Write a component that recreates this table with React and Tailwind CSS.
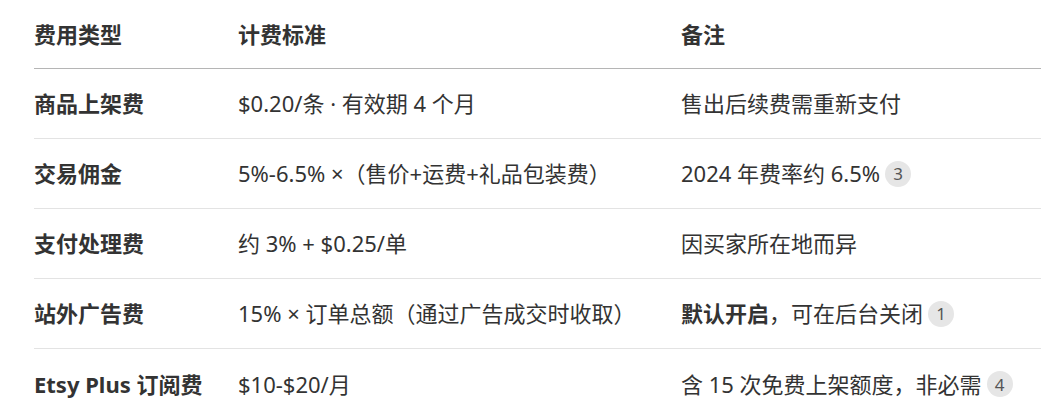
const rows = [
  {
    type: '商品上架费',
    rule: '$0.20/条 · 有效期 4 个月',
    note: <>售出后续费需重新支付</>,
  },
  {
    type: '交易佣金',
    rule: '5%-6.5% ×（售价+运费+礼品包装费）',
    note: <>2024 年费率约 6.5%</>,
    cite: '3',
  },
  {
    type: '支付处理费',
    rule: '约 3% + $0.25/单',
    note: <>因买家所在地而异</>,
  },
  {
    type: '站外广告费',
    rule: '15% × 订单总额（通过广告成交时收取）',
    note: <><strong className="font-bold">默认开启</strong>，可在后台关闭</>,
    cite: '1',
  },
  {
    type: 'Etsy Plus 订阅费',
    rule: '$10-$20/月',
    note: <>含 15 次免费上架额度，非必需</>,
    cite: '4',
  },
]

function Cite({ n }) {
  return (
    <span className="ml-[5px] inline-flex h-[26px] w-[26px] shrink-0 items-center justify-center rounded-full bg-[#e6e6e6] text-[17px] leading-none text-[#555]">
      {n}
    </span>
  )
}

export default function App() {
  return (
    <div
      className="bg-white pl-[34px] pr-[7px] text-[22px] text-[#333]"
      style={{ fontFamily: '"Noto Sans", "Noto Sans CJK SC", sans-serif' }}
    >
      <div className="grid h-[69px] grid-cols-[204px_443px_1fr] items-center border-b border-[#b5b5b5] font-bold">
        <div>费用类型</div>
        <div>计费标准</div>
        <div>备注</div>
      </div>
      {rows.map((row, i) => (
        <div
          key={row.type}
          className={`grid h-[70px] grid-cols-[204px_443px_1fr] items-center ${
            i < rows.length - 1 ? 'border-b border-[#e3e3e3]' : ''
          }`}
        >
          <div className="font-bold">{row.type}</div>
          <div>{row.rule}</div>
          <div className="flex items-center">
            <span>{row.note}</span>
            {row.cite && <Cite n={row.cite} />}
          </div>
        </div>
      ))}
    </div>
  )
}
